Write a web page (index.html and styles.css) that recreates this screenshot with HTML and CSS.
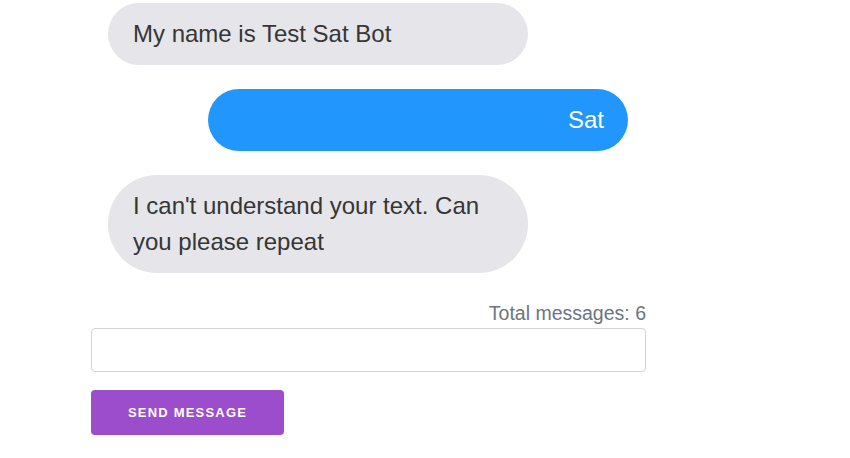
FILE: index.html
```html
<!DOCTYPE html>
<html>
<head>
<meta charset="utf-8">
<link rel="stylesheet" href="styles.css">
</head>
<body>
<div class="chat">
  <div class="messages">
    <div class="row row-bot"><div class="bubble bot">My name is Test Sat Bot</div></div>
    <div class="row row-user"><div class="bubble user">Sat</div></div>
    <div class="row row-bot"><div class="bubble bot">I can't understand your text. Can you please repeat</div></div>
  </div>
  <div class="total">Total messages: 6</div>
  <input class="input" type="text">
  <button class="send">SEND MESSAGE</button>
</div>
</body>
</html>
```
FILE: styles.css
```css
html, body {
  margin: 0;
  padding: 0;
  background: #ffffff;
  font-family: "Liberation Sans", Arial, sans-serif;
}
.chat {
  width: 555px;
  margin-left: 91px;
  padding-top: 3px;
  display: flex;
  flex-direction: column;
}
.messages {
  display: flex;
  flex-direction: column;
  gap: 24px;
  padding: 0 18px 0 17px;
}
.row {
  display: flex;
}
.row-user {
  justify-content: flex-end;
}
.bubble {
  width: 420px;
  box-sizing: border-box;
  padding: 13px 24px 13px 25px;
  font-size: 24px;
  line-height: 36px;
  border-radius: 50px;
}
.bot {
  background: #e5e5ea;
  color: #363636;
}
.user {
  background: #2196fd;
  color: #ffffff;
  text-align: right;
}
.total {
  margin-top: 29px;
  text-align: right;
  font-size: 19.5px;
  line-height: 22px;
  color: #6c757d;
}
.input {
  margin-top: 4px;
  height: 44px;
  box-sizing: border-box;
  border: 1px solid #d4d4d4;
  border-radius: 4px;
  padding: 0 12px;
  font-size: 16px;
  outline: none;
}
.send {
  margin-top: 18px;
  width: 193px;
  height: 45px;
  border: none;
  border-radius: 4px;
  background: #9c4dcc;
  color: #ffffff;
  font-family: "Liberation Sans", Arial, sans-serif;
  font-weight: bold;
  font-size: 13px;
  letter-spacing: 1.2px;
  cursor: pointer;
}
```
